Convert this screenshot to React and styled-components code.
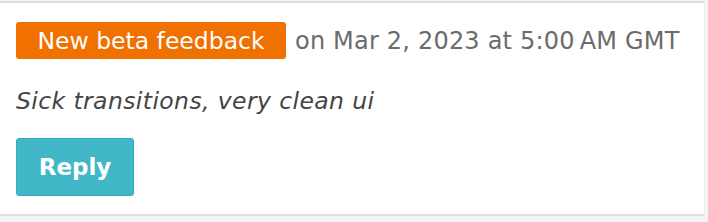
import React from "react";
import styled, { createGlobalStyle } from "styled-components";

const GlobalStyle = createGlobalStyle`
  html, body {
    margin: 0;
    padding: 0;
    background: #f4f4f4;
  }
  body {
    font-family: "DejaVu Sans", Verdana, sans-serif;
  }
`;

const Card = styled.div`
  margin-top: 1px;
  width: 705px;
  background: #fff;
  border-top: 2px solid #e0e0e0;
  border-bottom: 2px solid #e0e0e0;
  border-right: 1px solid #ececec;
  padding: 19px 16px 16px;
  box-sizing: border-box;
  height: 215px;
`;

const Header = styled.div`
  display: flex;
  align-items: center;
  gap: 9px;
`;

const Badge = styled.span`
  display: inline-flex;
  align-items: center;
  justify-content: center;
  height: 37px;
  width: 270px;
  box-sizing: border-box;
  background: #f07000;
  color: #fff;
  border-radius: 3px;
  font-size: 23.5px;
`;

const Meta = styled.span`
  color: #6b6b6b;
  font-size: 24px;
  letter-spacing: 0.2px;
`;

const Comment = styled.p`
  margin: 28px 0 0;
  color: #444;
  font-size: 23.5px;
  font-style: italic;
  letter-spacing: 0.4px;
`;

const ReplyButton = styled.button`
  margin-top: 23px;
  width: 118px;
  height: 58px;
  background: #42b7c7;
  border: 1px solid #3aa9b8;
  border-radius: 3px;
  color: #fff;
  font-family: "DejaVu Sans", Verdana, sans-serif;
  font-weight: bold;
  font-size: 23px;
  cursor: pointer;
`;

export default function App() {
  return (
    <>
      <GlobalStyle />
      <Card>
        <Header>
          <Badge>New beta feedback</Badge>
          <Meta>on Mar 2, 2023 at 5:00{"\u2009"}AM GMT</Meta>
        </Header>
        <Comment>Sick transitions, very clean ui</Comment>
        <ReplyButton>Reply</ReplyButton>
      </Card>
    </>
  );
}
